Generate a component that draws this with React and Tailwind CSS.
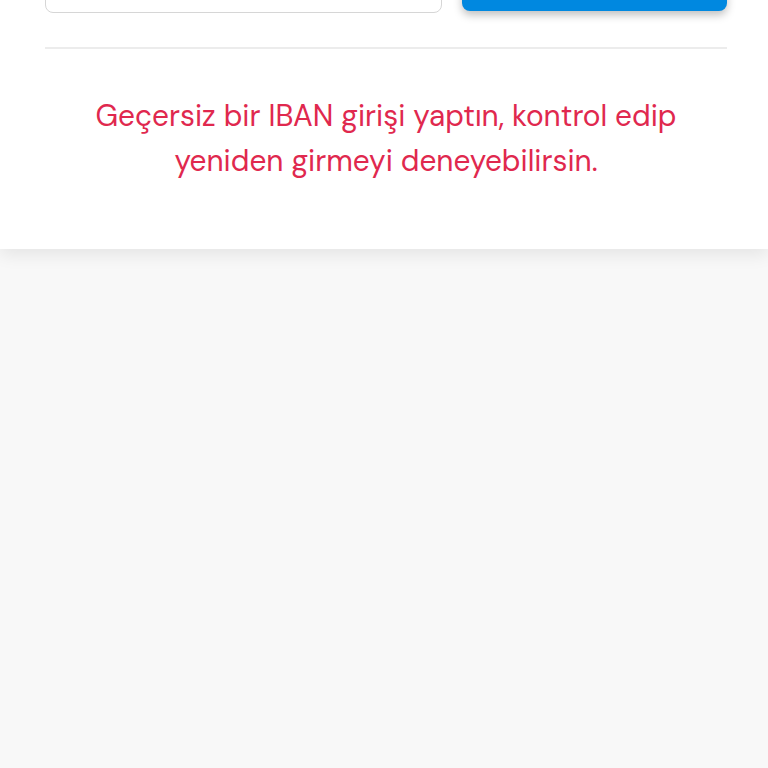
export default function App() {
  return (
    <div className="min-h-[768px] bg-[#f8f8f8]" style={{ fontFamily: '"DM Sans", "Open Sans", "Noto Sans", sans-serif' }}>
      <div className="bg-white shadow-[0_6px_16px_rgba(0,0,0,0.08)] overflow-hidden h-[249px]">
        <div className="px-[45px] pr-[41px]">
          <div className="flex gap-[20px] mt-[-44px]">
            <div className="w-[397px] h-[57px] border-[1.5px] border-[#d6d6d6] rounded-[8px] bg-white"></div>
            <div className="flex-1 h-[55px] rounded-[8px] bg-[#0088e0] shadow-[0_4px_8px_rgba(0,0,0,0.25)]"></div>
          </div>
          <div className="mt-[34px] h-[2px] bg-[#ececec]"></div>
          <p className="mt-[44px] text-center text-[29.8px] leading-[45px] text-[#e0284e] px-[10px]">
            Geçersiz bir IBAN girişi yaptın, kontrol edip yeniden girmeyi deneyebilirsin.
          </p>
        </div>
      </div>
    </div>
  );
}
